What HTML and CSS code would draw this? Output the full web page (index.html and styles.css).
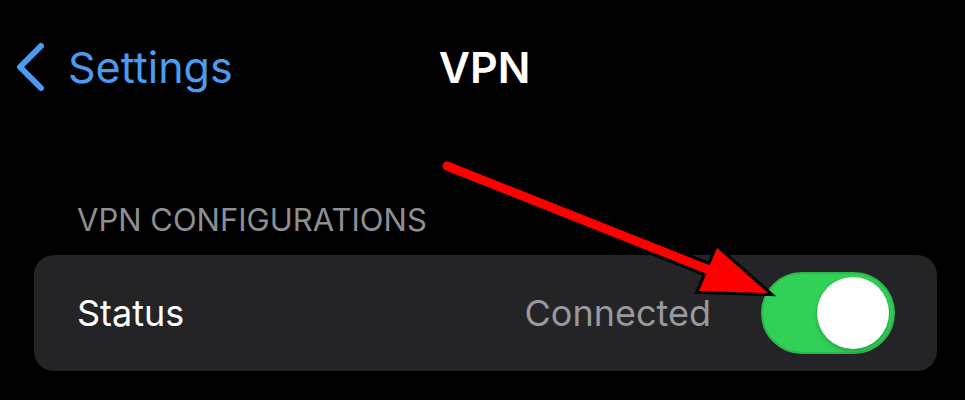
FILE: index.html
```html
<!DOCTYPE html>
<html lang="en">
<head>
    <meta charset="UTF-8">
    <meta name="viewport" content="width=device-width, initial-scale=1.0">
    <title>VPN</title>
    <link rel="stylesheet" href="styles.css">
</head>
<body>
    <nav class="nav-bar">
        <a class="back-link" href="#">
            <svg class="chevron" width="32" height="52" viewBox="0 0 32 52">
                <path d="M27 5 L6 26 L27 47" fill="none" stroke="#4b9cf1" stroke-width="6" stroke-linecap="round" stroke-linejoin="round"/>
            </svg>
            <span>Settings</span>
        </a>
        <h1 class="nav-title">VPN</h1>
        <div></div>
    </nav>

    <section class="group">
        <h2 class="group-label">VPN CONFIGURATIONS</h2>
        <div class="card">
            <span class="row-label">Status</span>
            <div class="row-value">
                <span class="status-text">Connected</span>
                <div class="toggle on"><div class="knob"></div></div>
            </div>
        </div>
    </section>

    <!-- red annotation arrow pointing at the switch -->
    <svg class="arrow" width="965" height="400" viewBox="0 0 965 400">
        <path d="M448.65 161.81 L709.65 265.3 L717 248 L768 293 L699 291 L706.35 273.7 L445.35 170.19 A4.5 4.5 0 0 1 448.65 161.81 Z"
              fill="#ff0000" stroke="#000" stroke-width="6" stroke-linejoin="miter" stroke-miterlimit="4" paint-order="stroke"/>
    </svg>
</body>
</html>
```

FILE: styles.css
```css
body {
    margin: 0;
    background-color: #000;
    font-family: Inter, "Liberation Sans", sans-serif;
    position: relative;
    width: 965px;
    height: 400px;
    overflow: hidden;
}

.nav-bar {
    display: grid;
    grid-template-columns: 1fr auto 1fr;
    align-items: center;
    padding: 41px 10px 0 14px;
    height: 52px;
}

.back-link {
    display: flex;
    align-items: center;
    gap: 22px;
    color: #4b9cf1;
    text-decoration: none;
    font-size: 43px;
    line-height: 52px;
}

.chevron {
    display: block;
}

.nav-title {
    margin: 0;
    color: #fff;
    font-size: 43px;
    line-height: 52px;
    font-weight: 600;
}

.group {
    margin: 107px 28px 0 34px;
}

.group-label {
    margin: 0 0 15px 43px;
    font-size: 31px;
    line-height: 40px;
    font-weight: 400;
    color: #8e8e93;
}

.card {
    display: flex;
    align-items: center;
    justify-content: space-between;
    height: 116px;
    padding: 0 42px 0 43px;
    background-color: #242426;
    border-radius: 20px;
}

.row-label {
    color: #fff;
    font-size: 36px;
}

.row-value {
    display: flex;
    align-items: center;
    gap: 50px;
}

.status-text {
    color: #98989e;
    font-size: 36px;
}

.toggle {
    box-sizing: border-box;
    width: 134px;
    height: 82px;
    padding: 5px 4px;
    border-radius: 41px;
    background-color: #31d158;
    border: 2px solid #2bb94e;
    display: flex;
    justify-content: flex-end;
    align-items: center;
}

.knob {
    width: 72px;
    height: 72px;
    border-radius: 50%;
    background-color: #fff;
    box-shadow: 0 2px 4px rgba(0, 0, 0, 0.25);
}

.arrow {
    position: absolute;
    top: 0;
    left: 0;
    pointer-events: none;
}
```
